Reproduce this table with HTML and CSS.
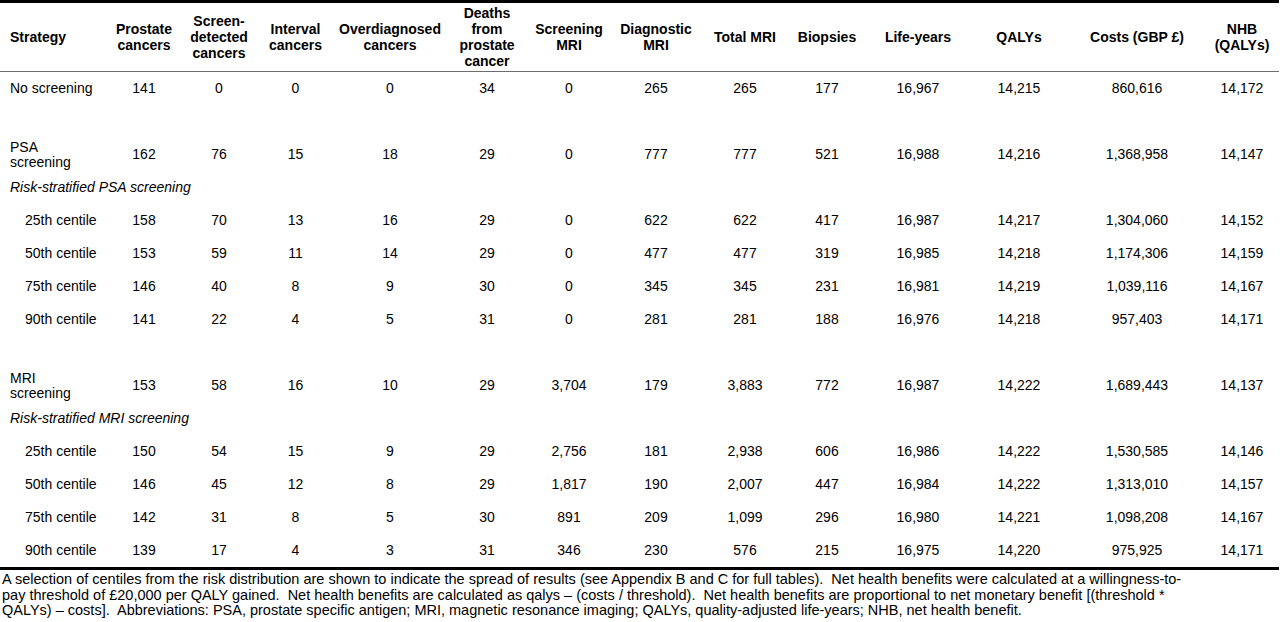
FILE: index.html
```html
<!DOCTYPE html>
<html lang="en">
<head>
    <meta charset="UTF-8">
    <meta name="viewport" content="width=device-width, initial-scale=1.0">
    <title>Screening strategies - results</title>
    <link rel="stylesheet" href="styles.css">
</head>
<body>
    <table class="results">
        <colgroup>
            <col class="c-strategy">
            <col class="c-prostate">
            <col class="c-screen">
            <col class="c-interval">
            <col class="c-over">
            <col class="c-deaths">
            <col class="c-smri">
            <col class="c-dmri">
            <col class="c-tmri">
            <col class="c-biopsy">
            <col class="c-life">
            <col class="c-qaly">
            <col class="c-cost">
            <col class="c-nhb">
        </colgroup>
        <thead>
            <tr>
                <th class="strategy">Strategy</th>
                <th>Prostate<br>cancers</th>
                <th>Screen-<br>detected<br>cancers</th>
                <th>Interval<br>cancers</th>
                <th>Overdiagnosed<br>cancers</th>
                <th>Deaths<br>from<br>prostate<br>cancer</th>
                <th>Screening<br>MRI</th>
                <th>Diagnostic<br>MRI</th>
                <th>Total MRI</th>
                <th>Biopsies</th>
                <th>Life-years</th>
                <th>QALYs</th>
                <th>Costs (GBP £)</th>
                <th>NHB<br>(QALYs)</th>
            </tr>
        </thead>
        <tbody>
            <tr>
                <td class="strategy">No screening</td>
                <td>141</td><td>0</td><td>0</td><td>0</td><td>34</td><td>0</td><td>265</td><td>265</td><td>177</td><td>16,967</td><td>14,215</td><td>860,616</td><td>14,172</td>
            </tr>
            <tr class="spacer"><td colspan="14"></td></tr>
            <tr>
                <td class="strategy">PSA<br>screening</td>
                <td>162</td><td>76</td><td>15</td><td>18</td><td>29</td><td>0</td><td>777</td><td>777</td><td>521</td><td>16,988</td><td>14,216</td><td>1,368,958</td><td>14,147</td>
            </tr>
            <tr>
                <td class="strategy group" colspan="14">Risk-stratified PSA screening</td>
            </tr>
            <tr>
                <td class="strategy sub">25th centile</td>
                <td>158</td><td>70</td><td>13</td><td>16</td><td>29</td><td>0</td><td>622</td><td>622</td><td>417</td><td>16,987</td><td>14,217</td><td>1,304,060</td><td>14,152</td>
            </tr>
            <tr>
                <td class="strategy sub">50th centile</td>
                <td>153</td><td>59</td><td>11</td><td>14</td><td>29</td><td>0</td><td>477</td><td>477</td><td>319</td><td>16,985</td><td>14,218</td><td>1,174,306</td><td>14,159</td>
            </tr>
            <tr>
                <td class="strategy sub">75th centile</td>
                <td>146</td><td>40</td><td>8</td><td>9</td><td>30</td><td>0</td><td>345</td><td>345</td><td>231</td><td>16,981</td><td>14,219</td><td>1,039,116</td><td>14,167</td>
            </tr>
            <tr>
                <td class="strategy sub">90th centile</td>
                <td>141</td><td>22</td><td>4</td><td>5</td><td>31</td><td>0</td><td>281</td><td>281</td><td>188</td><td>16,976</td><td>14,218</td><td>957,403</td><td>14,171</td>
            </tr>
            <tr class="spacer"><td colspan="14"></td></tr>
            <tr>
                <td class="strategy">MRI<br>screening</td>
                <td>153</td><td>58</td><td>16</td><td>10</td><td>29</td><td>3,704</td><td>179</td><td>3,883</td><td>772</td><td>16,987</td><td>14,222</td><td>1,689,443</td><td>14,137</td>
            </tr>
            <tr>
                <td class="strategy group" colspan="14">Risk-stratified MRI screening</td>
            </tr>
            <tr>
                <td class="strategy sub">25th centile</td>
                <td>150</td><td>54</td><td>15</td><td>9</td><td>29</td><td>2,756</td><td>181</td><td>2,938</td><td>606</td><td>16,986</td><td>14,222</td><td>1,530,585</td><td>14,146</td>
            </tr>
            <tr>
                <td class="strategy sub">50th centile</td>
                <td>146</td><td>45</td><td>12</td><td>8</td><td>29</td><td>1,817</td><td>190</td><td>2,007</td><td>447</td><td>16,984</td><td>14,222</td><td>1,313,010</td><td>14,157</td>
            </tr>
            <tr>
                <td class="strategy sub">75th centile</td>
                <td>142</td><td>31</td><td>8</td><td>5</td><td>30</td><td>891</td><td>209</td><td>1,099</td><td>296</td><td>16,980</td><td>14,221</td><td>1,098,208</td><td>14,167</td>
            </tr>
            <tr>
                <td class="strategy sub">90th centile</td>
                <td>139</td><td>17</td><td>4</td><td>3</td><td>31</td><td>346</td><td>230</td><td>576</td><td>215</td><td>16,975</td><td>14,220</td><td>975,925</td><td>14,171</td>
            </tr>
        </tbody>
    </table>

    <p class="note">
        A selection of centiles from the risk distribution are shown to indicate the spread of results (see Appendix B and C for full tables).&nbsp; Net health benefits were calculated at a willingness-to-<br>pay threshold of £20,000 per QALY gained.&nbsp; Net health benefits are calculated as qalys – (costs / threshold).&nbsp; Net health benefits are proportional to net monetary benefit [(threshold *<br>QALYs) – costs].&nbsp; Abbreviations: PSA, prostate specific antigen; MRI, magnetic resonance imaging; QALYs, quality-adjusted life-years; NHB, net health benefit.
    </p>
</body>
</html>
```

FILE: styles.css
```css
body {
    margin: 0;
    padding: 0;
    background: #fff;
    color: #000;
    font-family: "Liberation Sans", Arial, sans-serif;
}

.results {
    width: 1279px;
    table-layout: fixed;
    border-collapse: collapse;
    font-size: 14px;
}

.c-strategy { width: 106px; }
.c-prostate { width: 76px; }
.c-screen { width: 74px; }
.c-interval { width: 79px; }
.c-over { width: 110px; }
.c-deaths { width: 84px; }
.c-smri { width: 80px; }
.c-dmri { width: 94px; }
.c-tmri { width: 84px; }
.c-biopsy { width: 80px; }
.c-life { width: 102px; }
.c-qaly { width: 100px; }
.c-cost { width: 136px; }
.c-nhb { width: 74px; }

.results thead tr {
    border-top: 3px solid #000;
    border-bottom: 1px solid #6e6e6e;
}

.results th {
    height: 68px;
    padding: 0;
    font-weight: bold;
    line-height: 16px;
    text-align: center;
    vertical-align: middle;
    white-space: nowrap;
}

.results tbody {
    border-bottom: 3px solid #000;
}

.results td {
    height: 33px;
    padding: 0;
    line-height: 15px;
    text-align: center;
    vertical-align: middle;
    white-space: nowrap;
}

.results .strategy {
    text-align: left;
    padding-left: 10px;
}

.results .sub {
    padding-left: 25px;
}

.results .group {
    font-style: italic;
}

.results .spacer td {
    height: 33px;
}

.note {
    margin: 0;
    padding: 2px 0 0 2px;
    font-size: 14.5px;
    line-height: 15.5px;
}
```
